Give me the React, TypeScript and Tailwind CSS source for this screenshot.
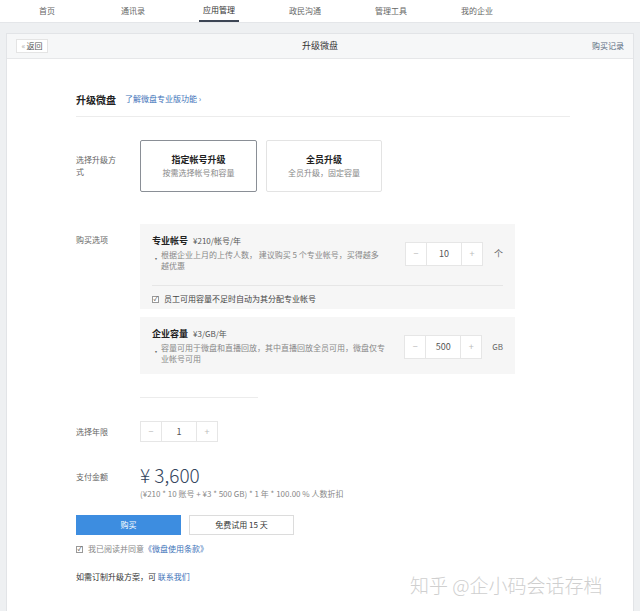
const font = { fontFamily: '"Noto Sans CJK SC", "Noto Sans", sans-serif' };

const tabs = ["首页", "通讯录", "应用管理", "政民沟通", "管理工具", "我的企业"];

function Stepper({ value, h = "h-[24px]" }: { value: string; h?: string }) {
  return (
    <div className={`flex ${h} bg-white border border-[#e6e6e6] text-[9px]`}>
      <div className="w-[20px] flex items-center justify-center text-[#bbb]">−</div>
      <div className="w-[36px] flex items-center justify-center text-[#555] border-x border-[#e6e6e6]">{value}</div>
      <div className="w-[20px] flex items-center justify-center text-[#bbb]">+</div>
    </div>
  );
}

function Check() {
  return (
    <span className="w-[7px] h-[7px] border border-[#999] bg-white flex items-center justify-center text-[6px] leading-none text-[#333]">✓</span>
  );
}

export default function App() {
  return (
    <div style={font} className="relative w-full h-[611px] bg-[#eef0f2] overflow-hidden text-[#333]">
      {/* top nav */}
      <div className="h-[23px] bg-white flex pl-[4px] border-b border-[#e4e6e9]">
        {tabs.map((t, i) => (
          <div key={t} className="w-[86px] flex justify-center">
            <span
              className={`h-full flex items-center text-[8px] px-[4px] ${
                i === 2 ? "border-b-2 border-[#3c4554] text-[#333]" : "text-[#666]"
              }`}
            >
              {t}
            </span>
          </div>
        ))}
      </div>

      {/* panel */}
      <div className="mx-[6px] mt-[10px] h-[600px] bg-white border border-[#e2e4e7]">
        <div className="h-[25px] bg-[#f6f7f8] border-b border-[#e6e7e9] flex items-center justify-between px-[9px]">
          <div className="w-[32px] h-[14px] bg-white border border-[#e4e4e4] flex items-center justify-center text-[8px] text-[#555]">
            <span className="text-[#aaa] mr-[1px]">«</span>返回
          </div>
          <div className="text-[9px] text-[#333]">升级微盘</div>
          <div className="text-[8px] text-[#5a6a80]">购买记录</div>
        </div>

        <div className="pl-[69px]">
          {/* heading */}
          <div className="mt-[33px] flex items-center h-[14px]">
            <span className="text-[10px] font-bold text-[#222]">升级微盘</span>
            <span className="ml-[9px] text-[8px] text-[#3d72b8]">了解微盘专业版功能 ›</span>
          </div>
          <div className="mt-[10px] w-[494px] border-t border-[#ececec]" />

          {/* upgrade mode */}
          <div className="mt-[23px] flex items-center">
            <div className="w-[64px] text-[8px] leading-[12px] text-[#666] pr-[18px]">选择升级方式</div>
            <div className="flex gap-[9px]">
              <div className="w-[117px] h-[52px] border border-[#8a8f96] rounded-[2px] flex flex-col items-center justify-center">
                <div className="text-[9px] font-bold text-[#222] leading-[14px]">指定帐号升级</div>
                <div className="text-[8px] text-[#888] leading-[12px]">按需选择帐号和容量</div>
              </div>
              <div className="w-[116px] h-[52px] border border-[#e3e3e3] rounded-[2px] flex flex-col items-center justify-center">
                <div className="text-[9px] font-bold text-[#222] leading-[14px]">全员升级</div>
                <div className="text-[8px] text-[#888] leading-[12px]">全员升级，固定容量</div>
              </div>
            </div>
          </div>

          {/* purchase options */}
          <div className="mt-[32px] flex">
            <div className="w-[64px] text-[8px] text-[#666] pt-[10px]">购买选项</div>
            <div className="flex flex-col gap-[8px]">
              <div className="w-[375px] h-[85px] bg-[#f6f6f6] px-[12px] pt-[10px]">
                <div className="flex items-start">
                  <div className="w-[246px]">
                    <div className="flex items-center h-[14px]">
                      <span className="text-[9px] font-bold text-[#222]">专业帐号</span>
                      <span className="ml-[5px] text-[8px] text-[#555]">¥210/帐号/年</span>
                    </div>
                    <div className="flex mt-[1px] text-[8px] leading-[11px] text-[#888]">
                      <span className="w-[9px] pt-[4px] text-[#666]">•</span>
                      <span className="w-[224px]">根据企业上月的上传人数， 建议购买 5 个专业帐号，买得越多越优惠</span>
                    </div>
                  </div>
                  <div className="ml-[17px] mt-[8px] flex items-center">
                    <Stepper value="10" />
                    <span className="ml-[11px] text-[9px] text-[#666]">个</span>
                  </div>
                </div>
                <div className="mt-[14px] w-[351px] border-t border-[#e6e6e6]" />
                <div className="mt-[7px] flex items-center gap-[5px] text-[8px] text-[#444]">
                  <Check />
                  员工可用容量不足时自动为其分配专业帐号
                </div>
              </div>

              <div className="w-[375px] h-[57px] bg-[#f6f6f6] px-[12px] pt-[10px]">
                <div className="flex items-start">
                  <div className="w-[246px]">
                    <div className="flex items-center h-[14px]">
                      <span className="text-[9px] font-bold text-[#222]">企业容量</span>
                      <span className="ml-[5px] text-[8px] text-[#555]">¥3/GB/年</span>
                    </div>
                    <div className="flex mt-[1px] text-[8px] leading-[11px] text-[#888]">
                      <span className="w-[9px] pt-[4px] text-[#666]">•</span>
                      <span className="w-[224px]">容量可用于微盘和直播回放，其中直播回放全员可用，微盘仅专业帐号可用</span>
                    </div>
                  </div>
                  <div className="ml-[17px] mt-[8px] flex items-center">
                    <Stepper value="500" />
                    <span className="ml-[10px] text-[8px] text-[#666]">GB</span>
                  </div>
                </div>
              </div>
            </div>
          </div>

          <div className="mt-[23px] ml-[64px] w-[118px] border-t border-[#ececec]" />

          {/* years */}
          <div className="mt-[23px] flex items-center">
            <div className="w-[64px] text-[8px] text-[#666]">选择年限</div>
            <Stepper value="1" h="h-[21px]" />
          </div>

          {/* amount */}
          <div className="mt-[20px] flex">
            <div className="w-[64px] text-[8px] text-[#666] pt-[9px]">支付金额</div>
            <div>
              <div className="text-[19px] leading-[26px] font-light text-[#34455e]">¥ 3,600</div>
              <div className="text-[8px] text-[#888] leading-[12px]">(¥210 * 10 账号 + ¥3 * 500 GB) * 1 年 * 100.00 % 人数折扣</div>
            </div>
          </div>

          {/* buttons */}
          <div className="mt-[15px] flex gap-[8px]">
            <div className="w-[105px] h-[20px] bg-[#3d8de0] text-white text-[8px] flex items-center justify-center">购买</div>
            <div className="w-[105px] h-[20px] bg-white border border-[#dcdcdc] text-[8px] text-[#333] flex items-center justify-center">免费试用 15 天</div>
          </div>

          <div className="mt-[8px] flex items-center gap-[5px] text-[8px] text-[#888]">
            <Check />
            <span>
              我已阅读并同意<span className="text-[#3d72b8]">《微盘使用条款》</span>
            </span>
          </div>

          <div className="mt-[16px] text-[8px] text-[#333]">
            如需订制升级方案，可 <span className="text-[#3d72b8]">联系我们</span>
          </div>
        </div>
      </div>

      {/* watermark */}
      <div className="absolute left-[410px] top-[571px] text-[19px] font-light text-[#cfcfcf] whitespace-nowrap">
        知乎 @企小码会话存档
      </div>
    </div>
  );
}
